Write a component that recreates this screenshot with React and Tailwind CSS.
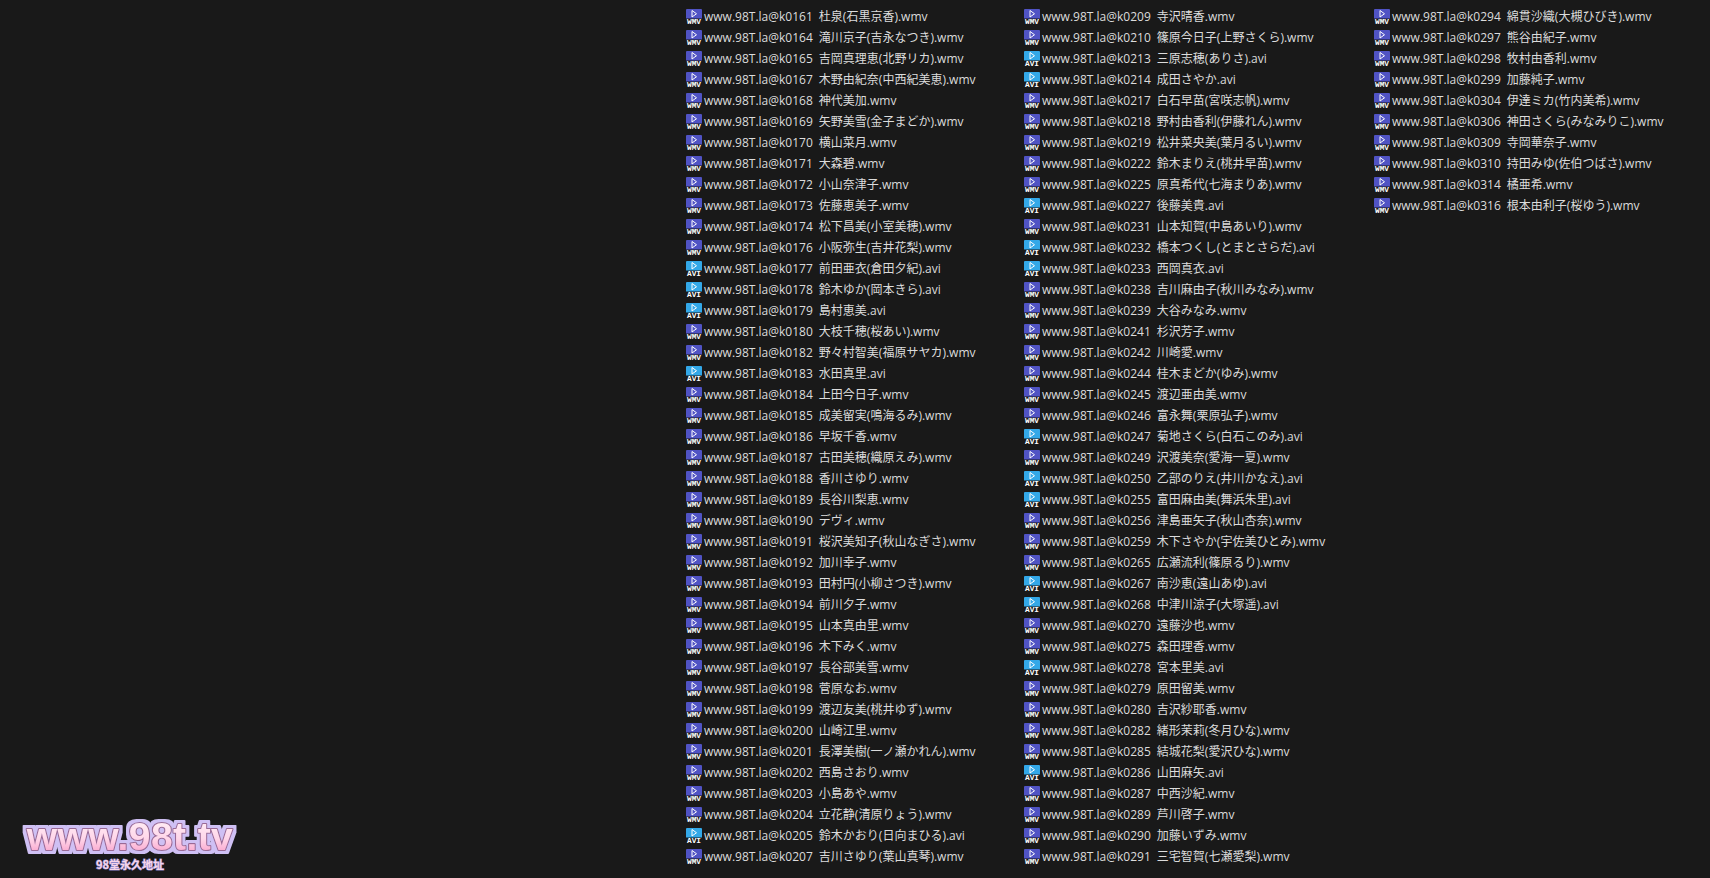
import React from "react";

const col1 = `k0161 杜泉(石黒京香).wmv
k0164 滝川京子(吉永なつき).wmv
k0165 吉岡真理恵(北野リカ).wmv
k0167 木野由紀奈(中西紀美恵).wmv
k0168 神代美加.wmv
k0169 矢野美雪(金子まどか).wmv
k0170 横山菜月.wmv
k0171 大森碧.wmv
k0172 小山奈津子.wmv
k0173 佐藤恵美子.wmv
k0174 松下昌美(小室美穂).wmv
k0176 小阪弥生(吉井花梨).wmv
k0177 前田亜衣(倉田夕紀).avi
k0178 鈴木ゆか(岡本きら).avi
k0179 島村恵美.avi
k0180 大枝千穂(桜あい).wmv
k0182 野々村智美(福原サヤカ).wmv
k0183 水田真里.avi
k0184 上田今日子.wmv
k0185 成美留実(鳴海るみ).wmv
k0186 早坂千香.wmv
k0187 古田美穂(織原えみ).wmv
k0188 香川さゆり.wmv
k0189 長谷川梨恵.wmv
k0190 デヴィ.wmv
k0191 桜沢美知子(秋山なぎさ).wmv
k0192 加川幸子.wmv
k0193 田村円(小柳さつき).wmv
k0194 前川夕子.wmv
k0195 山本真由里.wmv
k0196 木下みく.wmv
k0197 長谷部美雪.wmv
k0198 菅原なお.wmv
k0199 渡辺友美(桃井ゆず).wmv
k0200 山崎江里.wmv
k0201 長澤美樹(一ノ瀬かれん).wmv
k0202 西島さおり.wmv
k0203 小島あや.wmv
k0204 立花静(清原りょう).wmv
k0205 鈴木かおり(日向まひる).avi
k0207 吉川さゆり(葉山真琴).wmv`.split("\n");

const col2 = `k0209 寺沢晴香.wmv
k0210 篠原今日子(上野さくら).wmv
k0213 三原志穂(ありさ).avi
k0214 成田さやか.avi
k0217 白石早苗(宮咲志帆).wmv
k0218 野村由香利(伊藤れん).wmv
k0219 松井菜央美(葉月るい).wmv
k0222 鈴木まりえ(桃井早苗).wmv
k0225 原真希代(七海まりあ).wmv
k0227 後藤美貴.avi
k0231 山本知賀(中島あいり).wmv
k0232 橋本つくし(とまとさらだ).avi
k0233 西岡真衣.avi
k0238 吉川麻由子(秋川みなみ).wmv
k0239 大谷みなみ.wmv
k0241 杉沢芳子.wmv
k0242 川崎愛.wmv
k0244 桂木まどか(ゆみ).wmv
k0245 渡辺亜由美.wmv
k0246 富永舞(栗原弘子).wmv
k0247 菊地さくら(白石このみ).avi
k0249 沢渡美奈(愛海一夏).wmv
k0250 乙部のりえ(井川かなえ).avi
k0255 富田麻由美(舞浜朱里).avi
k0256 津島亜矢子(秋山杏奈).wmv
k0259 木下さやか(宇佐美ひとみ).wmv
k0265 広瀬流利(篠原るり).wmv
k0267 南沙恵(遠山あゆ).avi
k0268 中津川涼子(大塚遥).avi
k0270 遠藤沙也.wmv
k0275 森田理香.wmv
k0278 宮本里美.avi
k0279 原田留美.wmv
k0280 吉沢紗耶香.wmv
k0282 緒形茉莉(冬月ひな).wmv
k0285 結城花梨(愛沢ひな).wmv
k0286 山田麻矢.avi
k0287 中西沙紀.wmv
k0289 芦川啓子.wmv
k0290 加藤いずみ.wmv
k0291 三宅智賀(七瀬愛梨).wmv`.split("\n");

const col3 = `k0294 綿貫沙織(大槻ひびき).wmv
k0297 熊谷由紀子.wmv
k0298 牧村由香利.wmv
k0299 加藤純子.wmv
k0304 伊達ミカ(竹内美希).wmv
k0306 神田さくら(みなみりこ).wmv
k0309 寺岡華奈子.wmv
k0310 持田みゆ(佐伯つばさ).wmv
k0314 橘亜希.wmv
k0316 根本由利子(桜ゆう).wmv`.split("\n");

function FileIcon({ avi }) {
    return (
        <svg width="16" height="19" viewBox="0 0 16 19" className="mt-[2px] shrink-0">
            <path d="M1 1H15a1 1 0 0 1 1 1V10.5H0V2a1 1 0 0 1 1-1z" fill={avi ? "#33a8e8" : "#5053c4"} />
            <path d="M6 2.5L10.5 5.75L6 9z" fill="none" stroke="#fff" strokeWidth="1" />
            <text
                x="8"
                y="15.5"
                textAnchor="middle"
                fontSize="6.5"
                fontWeight="700"
                fontFamily="'Liberation Mono', monospace"
                fill="#ffffff"
                textLength="14"
                lengthAdjust="spacingAndGlyphs"
            >
                {avi ? "AVI" : "WMV"}
            </text>
        </svg>
    );
}

function Row({ name }) {
    return (
        <div className="flex h-[21px] items-start gap-[2px] whitespace-nowrap leading-[21px]">
            <FileIcon avi={name.endsWith(".avi")} />
            <span className="[word-spacing:3px]">www.98T.la@{name}</span>
        </div>
    );
}

function Column({ items, className }) {
    return (
        <div className={className}>
            {items.map((n) => (
                <Row key={n} name={n} />
            ))}
        </div>
    );
}

function Logo() {
    return (
        <svg width="270" height="78" viewBox="0 0 270 78" className="absolute bottom-0 left-0">
            <defs>
                <linearGradient id="pink" x1="0" y1="0" x2="0" y2="1">
                    <stop offset="0" stopColor="#fff4f9" />
                    <stop offset="0.55" stopColor="#ffd6e9" />
                    <stop offset="1" stopColor="#f895c4" />
                </linearGradient>
                <filter id="halo" x="-5%" y="-20%" width="110%" height="140%">
                    <feMorphology in="SourceAlpha" operator="dilate" radius="2.5" result="wide" />
                    <feGaussianBlur in="wide" stdDeviation="0.6" result="soft" />
                    <feFlood floodColor="#cfc0f4" />
                    <feComposite in2="soft" operator="in" result="ring" />
                    <feMerge>
                        <feMergeNode in="ring" />
                        <feMergeNode in="SourceGraphic" />
                    </feMerge>
                </filter>
            </defs>
            <text
                x="130"
                y="50"
                textAnchor="middle"
                fontFamily="'Liberation Sans', sans-serif"
                fontWeight="700"
                fontSize="39"
                letterSpacing="0.4"
                fill="url(#pink)"
                stroke="#9a6a96"
                strokeWidth="2.2"
                strokeLinejoin="round"
                paintOrder="stroke"
                filter="url(#halo)"
            >
                www.98t.tv
            </text>
            <text
                x="130"
                y="69"
                textAnchor="middle"
                fontSize="11"
                fontWeight="700"
                fontFamily="'Noto Sans CJK SC', sans-serif"
                fill="#f5d5ea"
                stroke="#8f86c8"
                strokeWidth="1"
                paintOrder="stroke"
            >
                98堂永久地址
            </text>
        </svg>
    );
}

export default function App() {
    return (
        <div
            className="relative flex h-[878px] overflow-hidden bg-[#191919] pl-[686px] pt-[6px] text-[12px] text-[#dcdcdc]"
            style={{ fontFamily: "'Open Sans', 'Noto Sans CJK JP', sans-serif" }}
        >
            <Column items={col1} className="w-[338px]" />
            <Column items={col2} className="w-[350px]" />
            <Column items={col3} />
            <Logo />
        </div>
    );
}
